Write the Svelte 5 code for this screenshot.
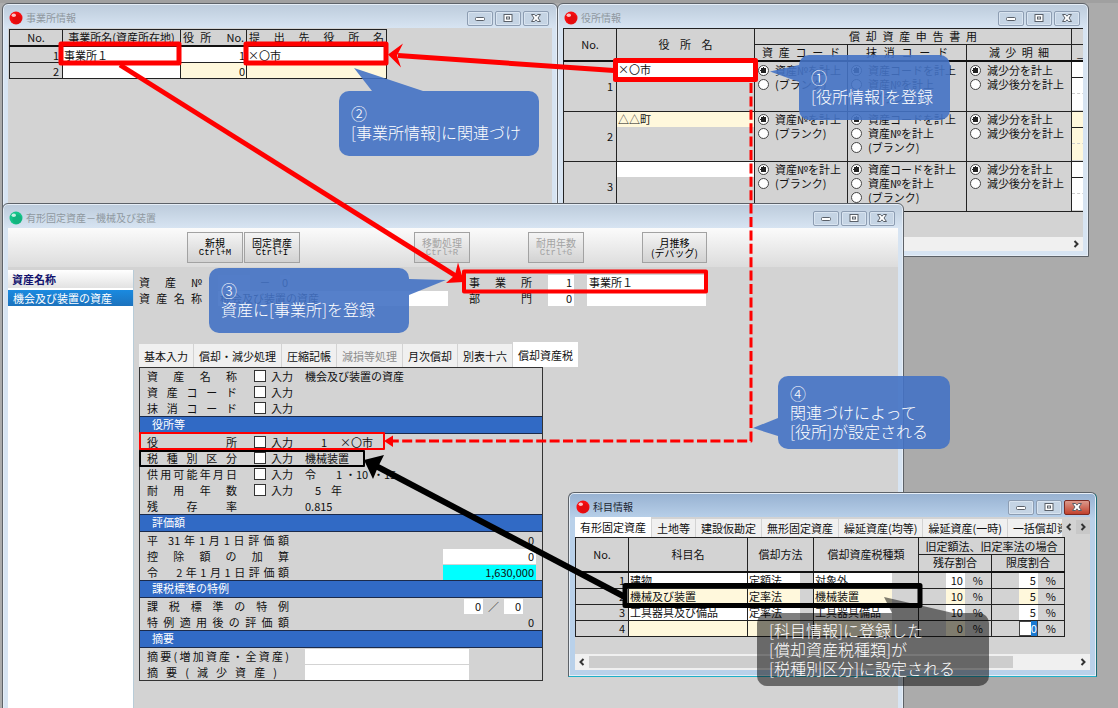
<script>
  const offices = [
    { no: 1, name: '事業所１', govNo: 1, gov: '×〇市' },
    { no: 2, name: '', govNo: 0, gov: '' }
  ];
  const governments = [
    { no: 1, name: '×〇市', alt: false },
    { no: 2, name: '△△町', alt: true },
    { no: 3, name: '', alt: false }
  ];
  const choices = [
    { key: 'asset', options: ['資産№を計上', '(ブランク)'] },
    { key: 'erase', options: ['資産コードを計上', '資産№を計上', '(ブランク)'] },
    { key: 'reduce', options: ['減少分を計上', '減少後分を計上'] }
  ];
  const tools = [
    { top: '新規', sub: 'Ctrl+M', cls: 'first' },
    { top: '固定資産', sub: 'Ctrl+I', cls: '' },
    { top: '移動処理', sub: 'Ctrl+R', cls: 'far', off: true },
    { top: '耐用年数', sub: 'Ctrl+G', cls: 'mid', off: true },
    { top: '月推移', sub: '(デバッグ)', cls: 'mid wide' }
  ];
  const assetTabs = ['基本入力', '償却・減少処理', '圧縮記帳', '減損等処理', '月次償却', '別表十六', '償却資産税'];
  const subjectTabs = ['有形固定資産', '土地等', '建設仮勘定', '無形固定資産', '繰延資産(均等)', '繰延資産(一時)', '一括償却資産'];
  const checks = [
    { label: '資産名称', value: '機会及び装置の資産' },
    { label: '資産コード', value: '' },
    { label: '抹消コード', value: '' }
  ];
  const subjects = [
    { no: 1, name: '建物', method: '定額法', kind: '対象外', rest: 10, limit: 5 },
    { no: 2, name: '機械及び装置', method: '定率法', kind: '機械装置', rest: 10, limit: 5 },
    { no: 3, name: '工具器具及び備品', method: '定率法', kind: '工具器具備品', rest: 10, limit: 5 },
    { no: 4, name: '', method: '', kind: '', rest: 0, limit: 0 }
  ];
</script>

{#snippet bar(title, color, active)}
  <header class="bar">
    <svg class="ball" viewBox="0 0 14 14" aria-hidden="true">
      <circle cx="7" cy="7" r="6.5" fill={color} />
      <circle cx="8.2" cy="8.4" r="4.8" fill="#000" opacity=".08" />
      <ellipse cx="4.8" cy="4.2" rx="2.2" ry="1.8" fill="#fff" opacity=".75" />
    </svg>
    <h2>{title}</h2>
    <div class="sys">
      <button aria-label="最小化"><svg viewBox="0 0 14 10"><rect x="2.5" y="4.5" width="9" height="3" rx="1" /></svg></button>
      <button aria-label="最大化"><svg viewBox="0 0 14 10"><rect x="3" y="1.5" width="8" height="7" /><rect x="5.5" y="4" width="3" height="2" /></svg></button>
      <button aria-label="閉じる" class:hot={active}><svg viewBox="0 0 14 10"><path d="M2.500 1.500h3L7 3.200 8.500 1.500h3L9 5l2.500 3.500h-3L7 6.800 5.500 8.500h-3L5 5z" /></svg></button>
    </div>
  </header>
{/snippet}

{#snippet check(label, value)}
  <div class="row">
    <span class="lab">{label}</span>
    <label class="tick"><input type="checkbox" aria-label={label + ' 入力'} />入力</label>
    <span class="val">{value}</span>
  </div>
{/snippet}

<main class="desk">
  <section class="win w1">
    {@render bar('事業所情報', '#f80d10', false)}
    <div class="body">
      <table class="t1">
        <colgroup><col class="c53" /><col class="c118" /><col class="c66" /><col /></colgroup>
        <thead>
          <tr><th>No.</th><th>事業所名(資産所在地)</th><th class="sp">役所 No.</th><th class="sp">提出先役所名</th></tr>
        </thead>
        <tbody>
          {#each offices as o}
            <tr>
              <td class="num">{o.no}</td>
              <td><input aria-label="事業所名" value={o.name} /></td>
              <td><input aria-label="役所No." class="r" class:alt={o.no === 2} value={o.govNo} /></td>
              <td><input aria-label="提出先役所名" class:alt={o.no === 2} value={o.gov} /></td>
            </tr>
          {/each}
        </tbody>
      </table>
    </div>
  </section>

  <section class="win w2">
    {@render bar('役所情報', '#f80d10', false)}
    <div class="body">
      <table class="t2">
        <colgroup><col class="c53" /><col class="c138" /><col class="c93" /><col class="c119" /><col class="c105" /><col /></colgroup>
        <thead>
          <tr><th rowspan="2">No.</th><th rowspan="2"><span class="spread w54">役所名</span></th><th colspan="3"><span class="spread w128">償却資産申告書用</span></th><th></th></tr>
          <tr><th><span class="spread w78">資産コード</span></th><th><span class="spread w82">抹消コード</span></th><th><span class="spread w60">減少明細</span></th><th class="cut">_</th></tr>
        </thead>
        <tbody>
          {#each governments as g}
            <tr>
              <td class="num">{g.no}</td>
              <td class="top"><input aria-label="役所名" class:alt={g.alt} value={g.name} /></td>
              {#each choices as c}
                <td class="top">
                  <div class="radios">
                    {#each c.options as o, i}
                      <label><input type="radio" name={c.key + g.no} checked={i === 0} />{o}</label>
                    {/each}
                  </div>
                </td>
              {/each}
              <td class="top"><div class="stack" class:alt={g.alt}><i></i><i></i><i></i></div></td>
            </tr>
          {/each}
        </tbody>
      </table>
      <div class="hscroll"><span></span><button aria-label="右へ"><svg viewBox="0 0 8 8"><path d="M2.500 1l3 3-3 3" /></svg></button></div>
    </div>
  </section>

  <section class="win w3">
    {@render bar('有形固定資産－機械及び装置', '#14c48a', false)}
    <div class="body">
      <div class="tools">
        {#each tools as t}
          <button class={t.cls} disabled={t.off}>{t.top}<small class:kana={t.cls.includes('wide')}>{t.sub}</small></button>
        {/each}
      </div>
      <div class="split">
        <aside>
          <h3>資産名称</h3>
          <button class="picked">機会及び装置の資産</button>
        </aside>
        <div class="pane">
          <div class="heads">
            <div class="grp">
              <div class="f"><span class="lab s">資産№</span><input class="n32" aria-label="資産№" value="" /><b>－</b><input class="n10 r" aria-label="枝番" value="0" /></div>
              <div class="f"><label class="lab s" for="an">資産名称</label><input id="an" class="n230" value="機会及び装置の資産" /></div>
            </div>
            <div class="grp">
              <div class="f"><label class="lab s" for="of">事業所</label><input id="of" class="n26 r" value="1" /><input class="n119" aria-label="事業所名称" value="事業所１" /></div>
              <div class="f"><label class="lab s" for="dp">部門</label><input id="dp" class="n26 r" value="0" /><input class="n119" aria-label="部門名称" value="" /></div>
            </div>
          </div>
          <nav class="tabs">
            {#each assetTabs as t, i}<button class:on={i === 6} disabled={i === 3}>{t}</button>{/each}
          </nav>
          <div class="sheet">
            {#each checks as c}{@render check(c.label, c.value)}{/each}
            <h4>役所等</h4>
            <div class="row">
              <span class="lab">役所</span><label class="tick"><input type="checkbox" />入力</label>
              <span class="val code">1</span><span class="after">×〇市</span>
            </div>
            {@render check('税種別区分', '機械装置')}
            <div class="row">
              <span class="lab">供用可能年月日</span><label class="tick"><input type="checkbox" />入力</label>
              <span class="val date"><span>令</span><span>1</span><span>・10</span><span>・15</span></span>
            </div>
            <div class="row">
              <span class="lab">耐用年数</span><label class="tick"><input type="checkbox" />入力</label>
              <span class="val years"><span>5</span><span>年</span></span>
            </div>
            <div class="row"><span class="lab">残存率</span><span class="tick"></span><span class="val">0.815</span></div>
            <h4>評価額</h4>
            <div class="row"><span class="lab l">平 31年1月1日評価額</span><span class="amt">0</span></div>
            <div class="row"><label class="lab l" for="dd">控除額の加算</label><input id="dd" class="amt" value="0" /></div>
            <div class="row"><label class="lab l" for="ev">令　2年1月1日評価額</label><input id="ev" class="amt cyan" value="1,630,000" /></div>
            <h4>課税標準の特例</h4>
            <div class="row"><span class="lab l">課税標準の特例</span><span class="frac"><input aria-label="分子" value="0" /><span>／</span><input aria-label="分母" value="0" /></span></div>
            <div class="row"><span class="lab l">特例適用後の評価額</span><span class="amt">0</span></div>
            <h4>摘要</h4>
            <div class="row"><label class="lab l" for="m1">摘要(増加資産・全資産)</label><input id="m1" class="memo" value="" /></div>
            <div class="row"><label class="lab l m" for="m2">摘要(減少資産)</label><input id="m2" class="memo" value="" /></div>
          </div>
        </div>
      </div>
    </div>
  </section>

  <section class="win w4">
    {@render bar('科目情報', '#f80d10', true)}
    <div class="body">
      <div class="tabline">
        <nav class="tabs">
          {#each subjectTabs as t, i}<button class:on={i === 0}>{t}</button>{/each}
        </nav>
        <button class="step" aria-label="前のタブ"><svg viewBox="0 0 8 8"><path d="M5.500 1l-3 3 3 3" /></svg></button>
        <button class="step dark" aria-label="次のタブ"><svg viewBox="0 0 8 8"><path d="M2.500 1l3 3-3 3" /></svg></button>
      </div>
      <table class="t4">
        <colgroup><col class="c53" /><col class="c119" /><col class="c66" /><col class="c105" /><col class="c73" /><col class="c73" /></colgroup>
        <thead>
          <tr><th rowspan="2">No.</th><th rowspan="2">科目名</th><th rowspan="2">償却方法</th><th rowspan="2">償却資産税種類</th><th colspan="2">旧定額法、旧定率法の場合</th></tr>
          <tr><th>残存割合</th><th>限度割合</th></tr>
        </thead>
        <tbody>
          {#each subjects as s}
            <tr class:even={s.no % 2 === 0}>
              <td class="num">{s.no}</td>
              <td><input aria-label="科目名" value={s.name} /></td>
              <td><input class="n52" aria-label="償却方法" value={s.method} /></td>
              <td><input class="n78" aria-label="償却資産税種類" value={s.kind} /></td>
              <td><div class="pct"><input aria-label="残存割合" value={s.rest} />%</div></td>
              <td><div class="pct">
                {#if s.no === 4}<span class="edit"><mark>{s.limit}</mark></span>{:else}<input aria-label="限度割合" value={s.limit} />{/if}%
              </div></td>
            </tr>
          {/each}
        </tbody>
      </table>
      <div class="hscroll full">
        <button aria-label="左へ"><svg viewBox="0 0 8 8"><path d="M5.500 1l-3 3 3 3" /></svg></button>
        <span class="track"><span class="thumb"></span></span>
        <button aria-label="右へ"><svg viewBox="0 0 8 8"><path d="M2.500 1l3 3-3 3" /></svg></button>
      </div>
    </div>
  </section>

  <svg class="links" width="1118" height="708" viewBox="0 0 1118 708" aria-hidden="true">
    <g fill="none" stroke="#f00" stroke-width="5" stroke-linejoin="round">
      <rect x="61" y="44" width="118" height="19" />
      <rect x="246" y="44" width="140" height="19" />
      <rect x="615.500" y="60.500" width="140" height="19" />
      <rect x="464" y="271.500" width="242" height="20" stroke-width="4" />
      <path d="M614 70.500L398 55.500" />
      <path d="M120 65L456 276" />
      <path d="M751 83V441H392" stroke-width="3" stroke-dasharray="10 3.400" />
      <rect x="140" y="433" width="244" height="16" stroke-width="2" />
    </g>
    <g fill="#f00">
      <path d="M388 54.500L403 43.500 397 55.500 401 67.500z" />
      <path d="M464 282L458 262.500 455 275 446 283z" />
      <path d="M384 441L393 435.500V447z" />
    </g>
    <g fill="none" stroke="#000" stroke-linejoin="round">
      <rect x="140" y="451" width="224" height="15" stroke-width="2" />
      <rect x="625" y="585.500" width="295" height="20" stroke-width="5" />
      <path d="M625 597L376 466" stroke-width="6" />
    </g>
    <path d="M364 460L384 455 378 467 373 479z" />
    <g fill="#4472c4" opacity=".9">
      <path d="M770 71.500L799 65V82z" />
      <path d="M354 68L372 91H423z" />
      <path d="M446 280L409 279V295z" />
      <path d="M753 428L778 418V436z" />
    </g>
    <path d="M884 597L892 613H953z" fill="#000" opacity=".5" />
  </svg>

  <p class="note n1">①<br />[役所情報]を登録</p>
  <p class="note n2">②<br />[事業所情報]に関連づけ</p>
  <p class="note n3">③<br />資産に[事業所]を登録</p>
  <p class="note n4">④<br />関連づけによって<br />[役所]が設定される</p>
  <p class="note n5">[科目情報]に登録した<br />[償却資産税種類]が<br />[税種別区分]に設定される</p>
</main>

<style>
  :global(body) { margin: 0; }
  .desk {
    position: relative; min-height: 100vh; overflow: hidden; background: #ababab;
    border-top: 3px solid #a0a0a0; box-sizing: border-box;
    font: 11px/16px "Noto Sans CJK JP", sans-serif; color: #111;
  }
  .desk * { box-sizing: border-box; }
  button, input { font: inherit; color: inherit; margin: 0; padding: 0; border: 0; }
  h2, h3, h4, p { margin: 0; font-weight: 400; font-size: 11px; }

  .win {
    position: absolute; display: flex; flex-direction: column; padding: 0 5px 5px;
    border: 1px solid #5d6268; border-radius: 6px 6px 0 0;
    background: linear-gradient(#bccbdb, #d7e4f2 24px); box-shadow: inset 0 0 0 1px #e6eef7;
  }
  .w1 { left: 2px; top: 0; width: 556px; height: 216px; }
  .w2 { left: 557px; top: 0; width: 532px; height: 254px; }
  .w3 { left: 2px; top: 200px; width: 902px; bottom: -8px; }
  .w4 {
    left: 568px; top: 489px; width: 529px; height: 185px; padding: 0 6px 6px;
    background: linear-gradient(#97b1d1, #b9d1ea 26px); border-bottom-color: #1cb0c8; border-right-color: #1c6a74;
  }
  .bar { flex: none; display: flex; align-items: center; height: 24px; padding: 4px 3px 0 1px; }
  .w4 .bar { padding-right: 0; }
  .ball { width: 14px; height: 14px; margin-right: 3px; }
  .bar h2 { font-size: 10px; line-height: 16px; color: #8f989f; }
  .w4 .bar h2 { color: #1c2733; }
  .sys { margin-left: auto; display: flex; gap: 2px; }
  .sys button {
    width: 26px; height: 15px; display: grid; place-items: center; border: 1px solid #8d9db2; border-radius: 2px;
    background: #c5d4e4; box-shadow: inset 0 0 0 1px #d9e4f0;
  }
  .sys svg { width: 14px; height: 10px; fill: #fff; stroke: #5a6069; stroke-width: 1; }
  .sys .hot { background: linear-gradient(#dc9a8c, #c2412c); border-color: #7c2a22; box-shadow: none; }
  .body { flex: 1; min-height: 0; overflow: hidden; background: #d3d3d3; display: flex; flex-direction: column; }

  table { border-collapse: collapse; table-layout: fixed; flex: none; }
  th, td { border: 1px solid #222; padding: 0; height: 16px; line-height: 15px; font-weight: 400; text-align: center; overflow: hidden; white-space: nowrap; }
  tbody td { text-align: left; }
  tbody tr:first-child td { border-top: 2px solid #111; }
  td input { display: block; width: 100%; height: 15px; line-height: 15px; background: #fff; padding: 0 1px; }
  td input.alt, .even td input, .alt { background: #fff8dc; }
  .r { text-align: right; }
  td.num { text-align: right; padding-right: 3px; }
  .c53 { width: 53px; } .c66 { width: 66px; } .c73 { width: 73px; } .c93 { width: 93px; } .c105 { width: 105px; }
  .c118 { width: 118px; } .c119 { width: 119px; } .c138 { width: 138px; }
  .t1 { width: 378px; margin: 1px 0 0 1px; }
  .t1 td, .t1 td input { line-height: 14px; }
  .t1 td input { height: 15px; }
  th.sp { text-align: justify; text-align-last: justify; padding: 0 2px; }
  .spread { display: block; margin: 0 auto; text-align: justify; text-align-last: justify; }
  .w54 { width: 54px; } .w60 { width: 60px; } .w78 { width: 78px; } .w82 { width: 82px; } .w128 { width: 128px; }
  .t2 { width: 600px; }
  .t2 tbody tr { height: 50px; }
  td.top { vertical-align: top; }
  th.cut { text-align: left; padding-left: 5px; }
  .radios { padding: 1px 0 0 3px; }
  .radios label { display: flex; align-items: center; height: 14px; gap: 6px; }
  td input[type='radio'] { appearance: none; width: 11px; height: 11px; padding: 0; border: 1px solid #444; border-radius: 50%; background: #fff; }
  td input[type='radio']:checked { background: radial-gradient(circle, #222 0 3px, #fff 3px); }
  .stack { display: flex; flex-direction: column; background: #fff; }
  .stack.alt { background: #fff8dc; }
  .stack i { height: 16px; border-bottom: 1px solid #222; }
  .stack i:nth-child(2) { border-bottom: 1px dashed #ccc; }
  .stack i:last-child { border: 0; }

  .hscroll { flex: none; height: 14px; margin-top: auto; display: flex; align-items: center; background: #f0f0f0; }
  .hscroll span:first-child { flex: 1; }
  .hscroll button, .step { width: 14px; height: 14px; background: none; display: grid; place-items: center; }
  .hscroll svg, .step svg { width: 8px; height: 8px; fill: none; stroke: #333; stroke-width: 2; }
  .hscroll.full { height: 16px; }
  .track { flex: 1; height: 12px; }
  .thumb { display: block; width: 87%; height: 12px; background: #cdcdcd; }

  .tools { flex: none; height: 39px; padding: 4px 0 0 179px; display: flex; background: linear-gradient(#fbfbfb, #dcdcdc); }
  .tools button {
    width: 56px; height: 31px; border: 1px solid #a2a2a2; background: linear-gradient(#f4f4f4, #d2d2d2);
    font-size: 10px; line-height: 10px; color: #000; margin-left: 1px;
  }
  .tools .first { margin-left: 0; }
  .tools .far { margin-left: 114px; }
  .tools .mid { margin-left: 58px; }
  .tools .wide { width: 65px; }
  .tools button:disabled { color: #a3a3a3; }
  small { display: block; font: 9px/10px "Liberation Mono", monospace; }
  small.kana { font: 10px/10px "Noto Sans CJK JP", sans-serif; }

  .split { flex: 1; display: flex; padding-top: 3px; min-height: 0; }
  aside { flex: none; width: 126px; background: #fff; border-right: 1px solid #b8ccd8; }
  aside h3 { height: 18px; line-height: 18px; padding-left: 4px; color: #14146e; font-weight: 700; background: linear-gradient(#fff, #e2e2e2); }
  .picked { display: block; width: 100%; height: 16px; margin-top: 2px; padding-left: 5px; line-height: 14px; text-align: left; color: #fff; background: linear-gradient(#1a8ae0, #1c72bd); white-space: nowrap; }
  .pane { flex: 1; padding-left: 5px; min-width: 0; }
  .heads { display: flex; gap: 21px; padding-top: 4px; height: 72px; }
  .f { display: flex; align-items: center; height: 16px; }
  .f input { height: 15px; padding: 0 2px; background: #fff; }
  .f b { width: 30px; text-align: center; font-weight: 400; }
  .lab { flex: none; width: 90px; text-align: justify; text-align-last: justify; white-space: nowrap; }
  .lab.s { width: 63px; margin-right: 16px; }
  .lab.l { width: 142px; }
  .n10 { width: 10px; } .n26 { width: 26px; margin-right: 13px; } .n32 { width: 32px; }
  .n119 { width: 119px; } .n230 { width: 230px; }
  .grp .f:first-child .n32, .grp .n10 { background: #dde0e4; }

  .tabs { display: flex; align-items: flex-end; gap: 1px; height: 25px; }
  .tabs button { flex: none; height: 23px; padding: 0 5px; line-height: 22px; background: #f0f0f0; white-space: nowrap; }
  .tabs button.on { height: 25px; background: #fff; }
  .tabs button:disabled { color: #8c8c8c; }
  .sheet { width: 404px; border: 1px solid #333; }
  .row { display: flex; align-items: center; height: 16px; padding-left: 7px; }
  .sheet h4 { height: 18px; line-height: 15px; padding-left: 12px; color: #fff; background: #316ac5; border: solid #1b2a4a; border-width: 1px 0; }
  .tick { flex: none; display: flex; align-items: center; gap: 5px; width: 51px; margin: 0 0 0 17px; }
  .tick input { appearance: none; width: 12px; height: 12px; border: 1px solid #333; background: #fff; }
  .val.code { width: 22px; text-align: right; }
  .after { margin-left: 13px; }
  .date { display: flex; }
  .date span:first-child { width: 31px; }
  .date span:nth-child(2) { width: 9px; }
  .date span:nth-child(3) { width: 28px; }
  .years { display: flex; gap: 10px; padding-left: 10px; }
  .amt { width: 93px; height: 15px; line-height: 15px; margin-left: auto; margin-right: 6px; padding-right: 2px; text-align: right; }
  input.amt { background: #fff; }
  input.cyan { background: #0ff; }
  .frac { margin-left: auto; margin-right: 19px; display: flex; align-items: center; gap: 5px; }
  .frac input { width: 19px; height: 15px; padding-right: 2px; text-align: right; background: #fff; }
  .lab.l.m { width: 130px; margin-right: 12px; }
  .memo { width: 164px; height: 15px; margin-left: 16px; background: #fff; }

  .tabline { flex: none; display: flex; align-items: center; height: 20px; }
  .tabline .tabs { flex: 1; min-width: 0; height: 20px; overflow: hidden; }
  .tabline .tabs button { height: 18px; line-height: 17px; }
  .tabline .tabs button.on { height: 20px; }
  .step.dark { background: #c8c8c8; }
  .t4 { width: 490px; }
  .t4 thead th { height: 17px; }
  .t4 .n52 { width: 52px; } .t4 .n78 { width: 78px; }
  .pct { display: flex; align-items: center; justify-content: flex-end; gap: 8px; padding-right: 8px; }
  .pct input, .edit { width: 19px; height: 15px; padding-right: 2px; text-align: right; }
  .edit { background: #fff; border: 1px solid #444; line-height: 13px; padding: 0; }
  mark { background: #1979d2; color: #fff; }

  .links { position: absolute; left: 0; top: -3px; pointer-events: none; }
  .note {
    position: absolute; padding: 13px 12px; border-radius: 10px; background: rgba(68, 114, 196, .9);
    color: #fff; font-size: 16px; line-height: 19px; font-weight: 300; white-space: nowrap;
  }
  .n1 { left: 799px; top: 52px; width: 151px; height: 65px; }
  .n2 { left: 339px; top: 88px; width: 200px; height: 65px; }
  .n3 { left: 209px; top: 265px; width: 200px; height: 65px; }
  .n4 { left: 778px; top: 373px; width: 172px; height: 73px; padding-top: 8px; }
  .n5 { left: 757px; top: 610px; width: 232px; height: 73px; padding-top: 8px; background: rgba(0, 0, 0, .5); }
</style>
